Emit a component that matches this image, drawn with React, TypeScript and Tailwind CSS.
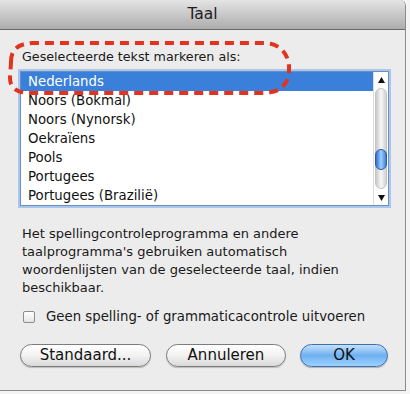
import React from "react";

const items = [
  "Nederlands",
  "Noors (Bokmal)",
  "Noors (Nynorsk)",
  "Oekraïens",
  "Pools",
  "Portugees",
  "Portugees (Brazilië)",
];

export default function App() {
  return (
    <div
      className="relative w-[410px] h-[394px] bg-[#f4f4f4] overflow-hidden"
      style={{ fontFamily: '"DejaVu Sans", "Lucida Grande", sans-serif' }}
    >
      <div className="w-[406px] h-[391px] flex flex-col rounded-tr-[6px] border-r border-b border-[#8a8a8a] bg-[#ececec] overflow-hidden">
        {/* title bar */}
        <div className="h-[30px] shrink-0 flex items-center justify-center bg-gradient-to-b from-[#e4e4e4] to-[#adadad] border-b border-[#6a6a6a]">
          <span className="text-[15.5px] text-[#1e1e1e] leading-none">Taal</span>
        </div>
        {/* body */}
        <div className="flex flex-col pl-[20px] pr-[16px] pt-[19px]">
          <div className="pl-[2px] text-[12.7px] leading-[16px] text-[#1a1a1a]">
            Geselecteerde tekst markeren als:
          </div>
          <div className="mt-[6px] w-[369px] h-[135px] flex border border-[#6d8fc0] bg-white shadow-[0_0_0_2px_#a9c6ec]">
            <div className="flex-1 flex flex-col">
              {items.map((t, i) => (
                <div
                  key={t}
                  className={
                    i === 0
                      ? "h-[19px] pl-[7px] flex items-center text-[13.3px] text-white bg-[#3a7fd9]"
                      : "h-[19px] pl-[7px] flex items-center text-[13.3px] text-[#111]"
                  }
                >
                  {t}
                </div>
              ))}
            </div>
            <div className="w-[15px] shrink-0 flex flex-col items-center bg-white border-l border-[#dcdcdc]">
              <div className="h-[15px] w-full flex items-center justify-center">
                <svg width="7" height="6" viewBox="0 0 7 6">
                  <polygon points="3.5,0 7,6 0,6" fill="#111" />
                </svg>
              </div>
              <div className="relative flex-1 w-[12px] my-[1px] rounded-full bg-gradient-to-r from-[#c9c9c9] via-[#f7f7f7] to-[#d2d2d2] border border-[#c4c4c4]">
                <div className="absolute left-[-1px] top-[60px] w-[12px] h-[21px] rounded-full bg-gradient-to-r from-[#2f6fd0] via-[#9fd0ff] to-[#3f80dc] border border-[#2a5ca8]" />
              </div>
              <div className="h-[15px] w-full flex items-center justify-center">
                <svg width="7" height="6" viewBox="0 0 7 6">
                  <polygon points="0,0 7,0 3.5,6" fill="#111" />
                </svg>
              </div>
            </div>
          </div>
          <div className="mt-[19px] pl-[2px] text-[13px] leading-[18px] text-[#1a1a1a]">
            Het spellingcontroleprogramma en andere
            <br />
            taalprogramma's gebruiken automatisch
            <br />
            woordenlijsten van de geselecteerde taal, indien
            <br />
            beschikbaar.
          </div>
          <div className="mt-[12px] pl-[3px] flex items-center gap-[11px] h-[16px]">
            <div className="w-[12px] h-[12px] rounded-[2px] border border-[#8c8c8c] bg-gradient-to-b from-white to-[#e6e6e6]" />
            <span className="text-[13.3px] text-[#1a1a1a]">
              Geen spelling- of grammaticacontrole uitvoeren
            </span>
          </div>
          <div className="mt-[19px] flex items-center">
            <button className="w-[131px] h-[23px] rounded-full border border-[#7c7c7c] bg-gradient-to-b from-white via-[#f2f2f2] to-[#d9d9d9] shadow-[0_1px_1px_rgba(0,0,0,0.2)] text-[15px] text-[#111] flex items-center justify-center">
              Standaard...
            </button>
            <button className="ml-[15px] w-[120px] h-[23px] rounded-full border border-[#7c7c7c] bg-gradient-to-b from-white via-[#f2f2f2] to-[#d9d9d9] shadow-[0_1px_1px_rgba(0,0,0,0.2)] text-[15px] text-[#111] flex items-center justify-center">
              Annuleren
            </button>
            <button className="ml-[14px] w-[88px] h-[23px] rounded-full border border-[#3f6fae] bg-gradient-to-b from-[#c4e0fb] via-[#6fb0f0] to-[#9dd2ff] shadow-[0_1px_1px_rgba(0,0,0,0.25)] text-[15px] text-[#111] flex items-center justify-center">
              OK
            </button>
          </div>
        </div>
      </div>
      {/* red dashed annotation */}
      <svg className="absolute left-0 top-0" width="410" height="394" viewBox="0 0 410 394">
        <path
          d="M 11 62 C 11 49, 18 44, 32 43 L 266 43 C 282 44, 290 57, 289 70 C 288 86, 280 93, 262 93 L 30 93 C 17 93, 10 88, 10 78 Z"
          fill="none"
          stroke="#e2331f"
          strokeWidth="4"
          strokeDasharray="9 6"
        />
      </svg>
    </div>
  );
}
